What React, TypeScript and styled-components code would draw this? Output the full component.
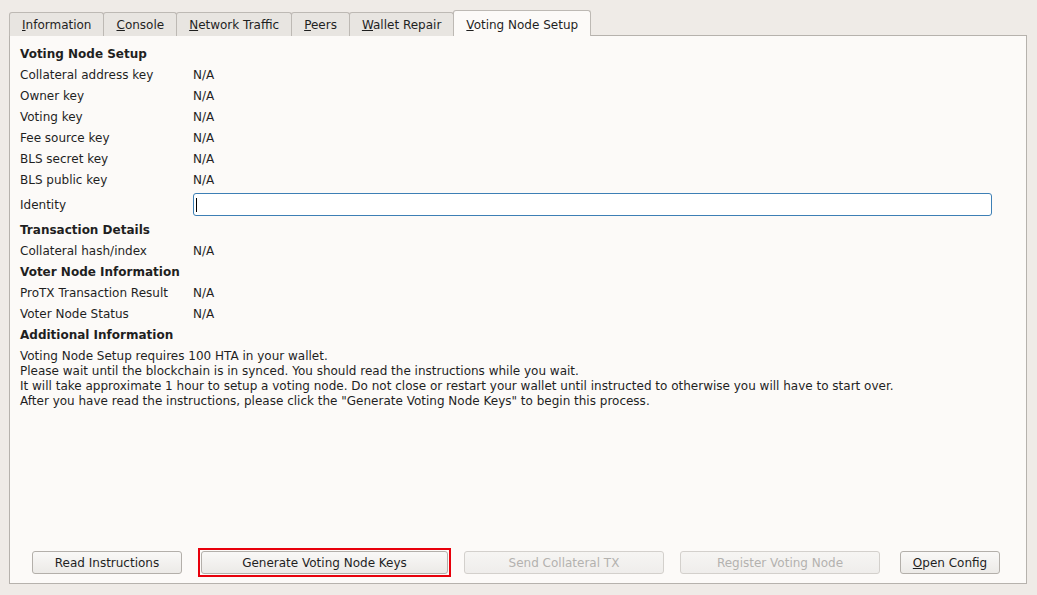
import React from "react";
import styled, { createGlobalStyle } from "styled-components";

const Global = createGlobalStyle`
  html, body { margin: 0; padding: 0; background: #efebe7; }
  body {
    font-family: "DejaVu Sans", "Liberation Sans", sans-serif;
    font-size: 12px;
    color: #1f1f1f;
  }
`;

const Window = styled.div`
  box-sizing: border-box;
  width: 1037px;
  height: 595px;
  padding: 10px 10px 11px 9px;
  display: flex;
  flex-direction: column;
`;

const TabBar = styled.div`
  display: flex;
  align-items: flex-end;
  height: 26px;
  padding-left: 1px;
`;

const Tab = styled.div<{ $active?: boolean }>`
  box-sizing: border-box;
  height: ${(p) => (p.$active ? "26px" : "24px")};
  margin-left: -1px;
  padding: ${(p) => (p.$active ? "2px 12px 0" : "0 12px")};
  display: flex;
  align-items: center;
  border: 1px solid #bdb9b4;
  border-bottom: none;
  border-radius: 3px 3px 0 0;
  background: ${(p) => (p.$active ? "#fcfaf8" : "#e8e5e1")};
  color: #1f1f1f;
  white-space: nowrap;
  position: relative;
  z-index: ${(p) => (p.$active ? 2 : 0)};
`;

const Panel = styled.div`
  flex: 1;
  box-sizing: border-box;
  margin-top: -1px;
  border: 1px solid #b6b2ad;
  background: #fcfaf8;
  padding: 7px 26px 6px 10px;
  display: flex;
  flex-direction: column;
`;

const Form = styled.div`
  display: flex;
  flex-direction: column;
`;

const Heading = styled.div`
  height: 21px;
  line-height: 23px;
  font-weight: bold;
`;

const Row = styled.div<{ $tall?: boolean }>`
  display: grid;
  grid-template-columns: 173px 1fr;
  align-items: center;
  height: ${(p) => (p.$tall ? "29px" : "21px")};
`;

const LineEdit = styled.div`
  box-sizing: border-box;
  height: 23px;
  width: 799px;
  border: 1px solid #3d7fb5;
  border-radius: 3px;
  background: #ffffff;
  display: flex;
  align-items: center;
  padding-left: 2px;
`;

const Caret = styled.span`
  display: block;
  width: 1px;
  height: 14px;
  background: #000;
`;

const Notes = styled.div`
  margin-top: 4px;
  line-height: 15px;
  flex: 1;
`;

const ButtonRow = styled.div`
  display: flex;
  align-items: center;
  padding-left: 12px;
`;

const Highlight = styled.div<{ $gap: number }>`
  margin-left: ${(p) => p.$gap}px;
  border: 2px solid #e8000b;
  padding: 1px;
  display: flex;
`;

const Button = styled.button<{ $w: number; $gap?: number }>`
  box-sizing: border-box;
  width: ${(p) => p.$w}px;
  height: 23px;
  margin-left: ${(p) => p.$gap ?? 0}px;
  padding: 0;
  font-family: "DejaVu Sans", "Liberation Sans", sans-serif;
  font-size: 12px;
  color: #1f1f1f;
  border: 1px solid #b3afaa;
  border-radius: 3px;
  background: linear-gradient(#f9f8f7, #eceae7);
  &:disabled {
    color: #b4b2af;
    border-color: #d3d0cc;
    background: linear-gradient(#f6f5f3, #efedeb);
  }
`;

const fields: [string, string][] = [
  ["Collateral address key", "N/A"],
  ["Owner key", "N/A"],
  ["Voting key", "N/A"],
  ["Fee source key", "N/A"],
  ["BLS secret key", "N/A"],
  ["BLS public key", "N/A"],
];

const tabs: [string, string, boolean?][] = [
  ["I", "nformation"],
  ["C", "onsole"],
  ["N", "etwork Traffic"],
  ["P", "eers"],
  ["W", "allet Repair"],
  ["V", "oting Node Setup", true],
];

export default function App() {
  return (
    <>
      <Global />
      <Window>
        <TabBar>
          {tabs.map(([m, rest, active]) => (
            <Tab key={m + rest} $active={active}>
              <span>
                <u>{m}</u>
                {rest}
              </span>
            </Tab>
          ))}
        </TabBar>
        <Panel>
          <Form>
            <Heading>Voting Node Setup</Heading>
            {fields.map(([k, v]) => (
              <Row key={k}>
                <span>{k}</span>
                <span>{v}</span>
              </Row>
            ))}
            <Row $tall>
              <span>Identity</span>
              <LineEdit>
                <Caret />
              </LineEdit>
            </Row>
            <Heading>Transaction Details</Heading>
            <Row>
              <span>Collateral hash/index</span>
              <span>N/A</span>
            </Row>
            <Heading>Voter Node Information</Heading>
            <Row>
              <span>ProTX Transaction Result</span>
              <span>N/A</span>
            </Row>
            <Row>
              <span>Voter Node Status</span>
              <span>N/A</span>
            </Row>
            <Heading>Additional Information</Heading>
          </Form>
          <Notes>
            Voting Node Setup requires 100 HTA in your wallet.
            <br />
            Please wait until the blockchain is in synced. You should read the instructions while you wait.
            <br />
            It will take approximate 1 hour to setup a voting node. Do not close or restart your wallet until instructed to otherwise you will have to start over.
            <br />
            After you have read the instructions, please click the "Generate Voting Node Keys" to begin this process.
          </Notes>
          <ButtonRow>
            <Button $w={150}>Read Instructions</Button>
            <Highlight $gap={16}>
              <Button $w={247}>Generate Voting Node Keys</Button>
            </Highlight>
            <Button $w={200} $gap={13} disabled>
              Send Collateral TX
            </Button>
            <Button $w={200} $gap={16} disabled>
              Register Voting Node
            </Button>
            <Button $w={100} $gap={20}>
              <u>O</u>pen Config
            </Button>
          </ButtonRow>
        </Panel>
      </Window>
    </>
  );
}
